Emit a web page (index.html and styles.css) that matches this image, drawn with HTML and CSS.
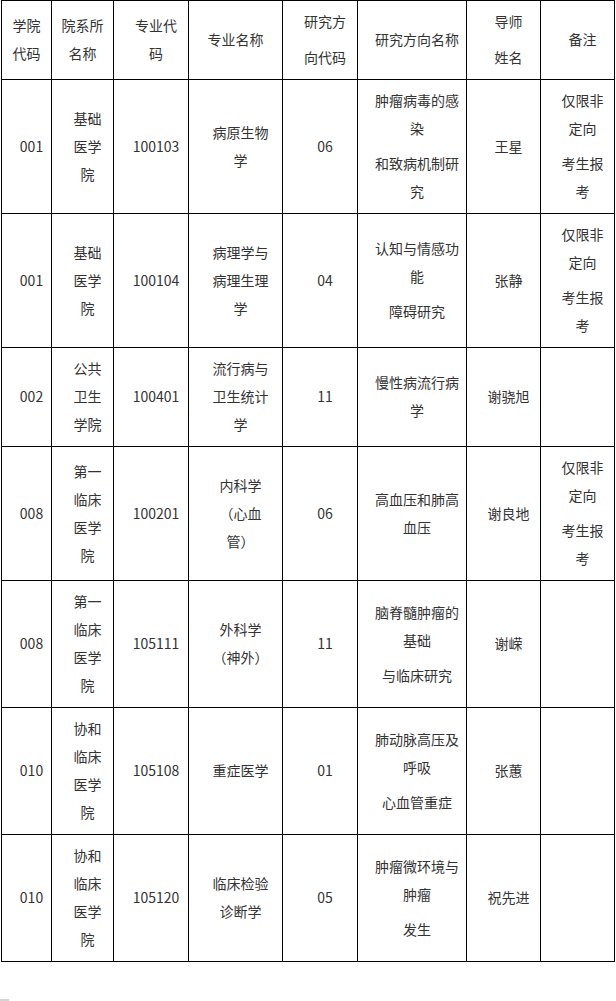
FILE: index.html
```html
<!DOCTYPE html>
<html lang="zh-CN">
<head>
<meta charset="utf-8">
<title>招生目录</title>
<link rel="stylesheet" href="styles.css">
</head>
<body>
<table class="catalog">
  <colgroup>
    <col class="w1"><col class="w2"><col class="w3"><col class="w4">
    <col class="w5"><col class="w6"><col class="w7"><col class="w8">
  </colgroup>
  <thead>
    <tr>
      <th class="ctr">学院代码</th>
      <th class="ctr">院系所名称</th>
      <th>专业代码</th>
      <th class="ctr">专业名称</th>
      <th><p>研究方</p><p>向代码</p></th>
      <th class="c6">研究方向名称</th>
      <th><p>导师</p><p>姓名</p></th>
      <th>备注</th>
    </tr>
  </thead>
  <tbody>
    <tr>
      <td class="c1">001</td>
      <td>基础医学院</td>
      <td>100103</td>
      <td>病原生物学</td>
      <td>06</td>
      <td class="c6"><p>肿瘤病毒的感染</p><p>和致病机制研究</p></td>
      <td>王星</td>
      <td><p>仅限非定向</p><p>考生报考</p></td>
    </tr>
    <tr>
      <td class="c1">001</td>
      <td>基础医学院</td>
      <td>100104</td>
      <td>病理学与病理生理学</td>
      <td>04</td>
      <td class="c6"><p>认知与情感功能</p><p>障碍研究</p></td>
      <td>张静</td>
      <td><p>仅限非定向</p><p>考生报考</p></td>
    </tr>
    <tr>
      <td class="c1">002</td>
      <td>公共卫生学院</td>
      <td>100401</td>
      <td>流行病与卫生统计学</td>
      <td>11</td>
      <td class="c6">慢性病流行病学</td>
      <td>谢骁旭</td>
      <td></td>
    </tr>
    <tr>
      <td class="c1">008</td>
      <td>第一临床医学院</td>
      <td>100201</td>
      <td>内科学（心血管）</td>
      <td>06</td>
      <td class="c6">高血压和肺高血压</td>
      <td>谢良地</td>
      <td><p>仅限非定向</p><p>考生报考</p></td>
    </tr>
    <tr>
      <td class="c1">008</td>
      <td>第一临床医学院</td>
      <td>105111</td>
      <td>外科学（神外）</td>
      <td>11</td>
      <td class="c6"><p>脑脊髓肿瘤的基础</p><p>与临床研究</p></td>
      <td>谢嵘</td>
      <td></td>
    </tr>
    <tr>
      <td class="c1">010</td>
      <td>协和临床医学院</td>
      <td>105108</td>
      <td>重症医学</td>
      <td>01</td>
      <td class="c6"><p>肺动脉高压及呼吸</p><p>心血管重症</p></td>
      <td>张蕙</td>
      <td></td>
    </tr>
    <tr>
      <td class="c1">010</td>
      <td>协和临床医学院</td>
      <td>105120</td>
      <td>临床检验诊断学</td>
      <td>05</td>
      <td class="c6"><p>肿瘤微环境与肿瘤</p><p>发生</p></td>
      <td>祝先进</td>
      <td></td>
    </tr>
  </tbody>
</table>
<div class="mark"></div>
</body>
</html>
```

FILE: styles.css
```css
html, body {
  margin: 0;
  padding: 0;
  background: #ffffff;
}

body {
  font-family: "Noto Sans CJK SC", "Noto Sans", sans-serif;
  font-size: 14px;
  line-height: 28px;
  color: #333333;
  text-spacing-trim: space-all;
}

.catalog {
  border-collapse: collapse;
  table-layout: fixed;
  width: 614px;
  margin: 0 0 0 1px;
}

.w1 { width: 50px; }
.w2 { width: 62px; }
.w3 { width: 75px; }
.w4 { width: 94px; }
.w5 { width: 75px; }
.w6 { width: 109px; }
.w7 { width: 74px; }
.w8 { width: 74px; }

.catalog th,
.catalog td {
  border: 1px solid #000000;
  padding: 6px 8px 8px 18px;
  text-align: center;
  vertical-align: middle;
  font-weight: normal;
  word-break: normal;
  text-spacing-trim: space-all;
}

.catalog th.ctr {
  padding: 6px 8px 8px 8px;
}

.catalog td.c1 {
  padding: 6px 2px 8px 12px;
  white-space: nowrap;
}

.catalog .c6 {
  padding: 6px 4px 8px 14px;
}

.catalog p {
  margin: 0;
}

.catalog p + p {
  margin-top: 7px;
}

.catalog thead p + p {
  margin-top: 8px;
}

.mark {
  width: 9px;
  height: 3px;
  margin-top: 37px;
  background: #d4d4d4;
}
```
